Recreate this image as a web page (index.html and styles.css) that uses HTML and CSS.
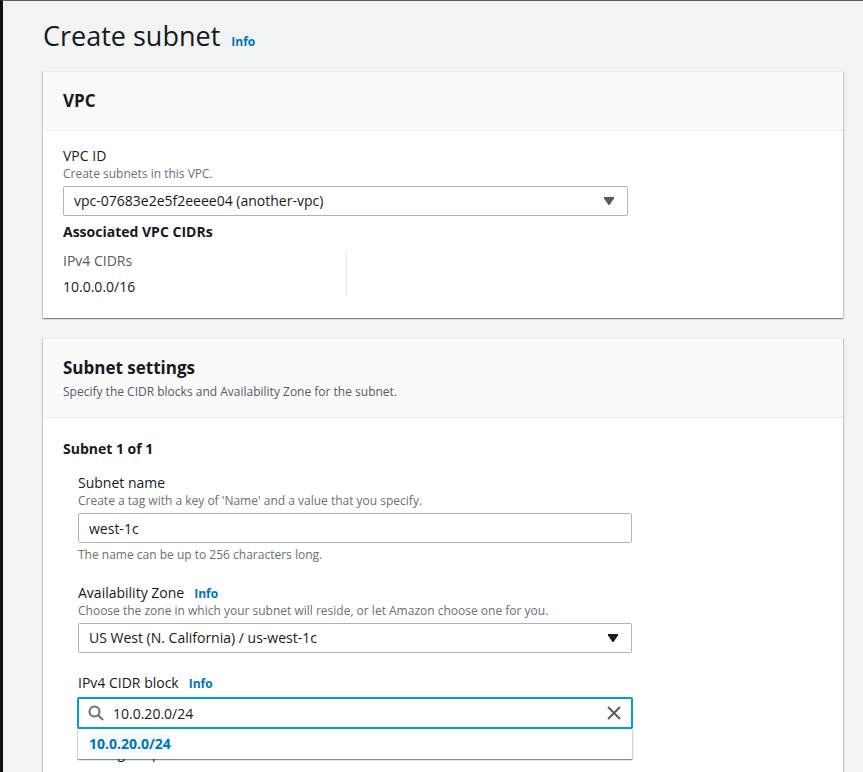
FILE: index.html
```html
<!DOCTYPE html>
<html lang="en">
<head>
<meta charset="utf-8">
<title>Create subnet</title>
<link rel="stylesheet" href="styles.css">
</head>
<body>
<main class="page">
  <header class="page-header">
    <h1>Create subnet</h1>
    <a class="info" href="#">Info</a>
  </header>

  <section class="card">
    <header class="card-header">
      <h2>VPC</h2>
    </header>
    <div class="card-body vpc-body">
      <div class="field wide">
        <label for="vpc">VPC ID</label>
        <p class="hint">Create subnets in this VPC.</p>
        <div class="control">
          <select id="vpc"><option>vpc-07683e2e5f2eeee04 (another-vpc)</option></select>
          <svg class="caret muted" viewBox="0 0 10 8" aria-hidden="true"><path d="M0 0h10v1.500L5.500 8h-1L0 1.500z"/></svg>
        </div>
      </div>
      <h3>Associated VPC CIDRs</h3>
      <dl class="cidrs">
        <div class="cidr">
          <dt>IPv4 CIDRs</dt>
          <dd>10.0.0.0/16</dd>
        </div>
      </dl>
    </div>
  </section>

  <section class="card grow">
    <header class="card-header described">
      <h2>Subnet settings</h2>
      <p class="description">Specify the CIDR blocks and Availability Zone for the subnet.</p>
    </header>
    <div class="card-body">
      <h3>Subnet 1 of 1</h3>
      <div class="subnet">
        <div class="field">
          <label for="name">Subnet name</label>
          <p class="hint">Create a tag with a key of 'Name' and a value that you specify.</p>
          <input id="name" type="text" value="west-1c">
          <p class="constraint">The name can be up to 256 characters long.</p>
        </div>
        <div class="field">
          <div class="label-row">
            <label for="zone">Availability Zone</label>
            <a class="info" href="#">Info</a>
          </div>
          <p class="hint">Choose the zone in which your subnet will reside, or let Amazon choose one for you.</p>
          <div class="control">
            <select id="zone"><option>US West (N. California) / us-west-1c</option></select>
            <svg class="caret" viewBox="0 0 10 8" aria-hidden="true"><path d="M0 0h10v1.500L5.500 8h-1L0 1.500z"/></svg>
          </div>
        </div>
        <div class="field">
          <div class="label-row">
            <label for="cidr">IPv4 CIDR block</label>
            <a class="info" href="#">Info</a>
          </div>
          <div class="search">
            <svg class="search-icon" viewBox="0 0 16 16" aria-hidden="true"><circle cx="6.500" cy="6.500" r="5"/><path d="M10 10l5 5"/></svg>
            <input id="cidr" type="text" value="10.0.20.0/24" autocomplete="off">
            <button class="clear" type="button" aria-label="Clear"><svg viewBox="0 0 14 14" aria-hidden="true"><path d="M1 1l12 12M13 1L1 13"/></svg></button>
            <ul class="suggestions">
              <li><mark>10.0.20.0/24</mark></li>
            </ul>
          </div>
        </div>
        <details class="tags">
          <summary><svg class="caret" viewBox="0 0 8 10" aria-hidden="true"><path d="M0 0h1.500L8 4.500v1L1.500 10H0z"/></svg>Tags - optional</summary>
        </details>
      </div>
    </div>
  </section>
</main>
</body>
</html>
```
FILE: styles.css
```css
* {
  box-sizing: border-box;
}

body {
  margin: 0;
  background: #f2f3f3;
  color: #16191f;
  font: 14px/20px "Open Sans", "Noto Sans", sans-serif;
}

h1, h2, h3, p, dl, dd, ul {
  margin: 0;
  padding: 0;
}

.page {
  display: flex;
  flex-direction: column;
  gap: 20px;
  min-height: 100vh;
  padding: 15px 20px 0 40px;
  border-top: 1px solid #545b64;
  border-left: 3px solid #0f1114;
}

.page-header {
  display: flex;
  align-items: baseline;
  gap: 11px;
  height: 35px;
}

h1 {
  font-size: 27px;
  line-height: 39px;
  font-weight: 400;
}

h2 {
  font-size: 17px;
  line-height: 22px;
  font-weight: 700;
}

h3 {
  font-size: 14px;
  line-height: 20px;
  font-weight: 700;
}

.info {
  color: #0073bb;
  font-size: 12px;
  font-weight: 700;
  text-decoration: none;
}

.card {
  background: #fff;
  border-top: 1px solid #eaeded;
  box-shadow: 0 1px 1px rgba(0, 28, 36, 0.3), 1px 1px 1px rgba(0, 28, 36, 0.15), -1px 1px 1px rgba(0, 28, 36, 0.15);
}

.grow {
  flex: 1;
}

.card-header {
  padding: 18px 20px;
  background: #fafafa;
  border-bottom: 1px solid #eaeded;
}

.described {
  padding-bottom: 15px;
}

.card-body {
  padding: 21px 20px 0;
}

.vpc-body {
  padding: 15px 20px 21px;
}

.description {
  margin-top: 3px;
  color: #545b64;
  font-size: 12px;
}

.field {
  max-width: 554px;
}

.wide {
  max-width: 565px;
}

.label-row {
  display: flex;
  align-items: baseline;
  gap: 10px;
  height: 20px;
}

label {
  display: block;
}

.hint, .constraint {
  color: #687078;
  font-size: 12px;
  line-height: 16px;
}

.hint {
  margin-bottom: 4px;
}

.constraint {
  margin-top: 4px;
}

input, select {
  display: block;
  width: 100%;
  height: 30px;
  padding: 0 10px;
  appearance: none;
  border: 1px solid #aab7b8;
  border-radius: 2px;
  background: #fff;
  color: #16191f;
  font: inherit;
  outline: 0;
}

.control, .search {
  position: relative;
}

.caret {
  width: 10px;
  height: 8px;
  fill: #16191f;
}

.control .caret {
  position: absolute;
  top: 11px;
  right: 14px;
  pointer-events: none;
}

.control .muted {
  fill: #545b64;
}

.vpc-body h3 {
  margin: 6px 0 9px;
}

.cidrs {
  display: grid;
  grid-template-columns: 284px 1fr;
}

.cidr {
  border-right: 1px solid #eaeded;
}

dt {
  color: #545b64;
  margin-bottom: 6px;
}

.subnet {
  display: flex;
  flex-direction: column;
  gap: 20px;
  padding: 14px 0 0 15px;
}

.search {
  margin: 4px -1px 0;
}

.search input {
  height: 32px;
  padding: 0 36px 0 34px;
  border: 2px solid #00a1c9;
}

.search-icon {
  position: absolute;
  top: 8px;
  left: 11px;
  width: 16px;
  height: 16px;
  fill: none;
  stroke: #687078;
  stroke-width: 2;
}

.clear {
  position: absolute;
  top: 9px;
  right: 12px;
  width: 14px;
  height: 14px;
  padding: 0;
  border: 0;
  background: none;
}

.clear svg {
  display: block;
  fill: none;
  stroke: #545b64;
  stroke-width: 2;
}

.suggestions {
  position: absolute;
  top: 32px;
  left: 1px;
  right: 1px;
  height: 30px;
  padding: 5px 11px;
  background: #fff;
  box-shadow: 0 1px 1px rgba(0, 28, 36, 0.3), 1px 1px 1px rgba(0, 28, 36, 0.15), -1px 1px 1px rgba(0, 28, 36, 0.15);
  list-style: none;
}

mark {
  background: #f1faff;
  color: #0073bb;
  font-weight: 700;
}

.tags {
  margin-top: -6px;
}

.tags summary {
  display: flex;
  align-items: center;
  gap: 10px;
  padding-left: 4px;
  list-style: none;
}
```
